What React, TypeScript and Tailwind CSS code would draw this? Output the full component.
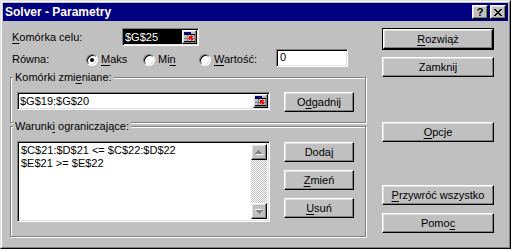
import React from 'react';

// classic 3D edges
const raised =
  'bg-[#c0c0c0] border border-t-white border-l-white border-r-black border-b-black shadow-[inset_-1px_-1px_0_#808080,inset_1px_1px_0_#dfdfdf]';
const sunken =
  'border border-t-[#808080] border-l-[#808080] border-r-white border-b-white shadow-[inset_1px_1px_0_#000,inset_-1px_-1px_0_#dfdfdf]';

const Key: React.FC<{ children: React.ReactNode }> = ({ children }) => (
  <span className="underline decoration-1 underline-offset-[2px]">{children}</span>
);

const Button: React.FC<{ className?: string; children: React.ReactNode }> = ({ className = '', children }) => (
  <div className={`${raised} h-[20px] flex items-center justify-center leading-none ${className}`}>{children}</div>
);

const RefButton: React.FC = () => (
  <div className={`${raised} w-[15px] h-[14px] flex items-center justify-center shrink-0`}>
    <svg width="11" height="10" viewBox="0 0 11 10" shapeRendering="crispEdges">
      <rect x="0" y="0" width="7" height="2" fill="#000080" />
      <rect x="0" y="2" width="11" height="1" fill="#000" />
      <rect x="3" y="3" width="1" height="7" fill="#808080" />
      <rect x="7" y="3" width="1" height="7" fill="#808080" />
      <rect x="10" y="3" width="1" height="7" fill="#808080" />
      <rect x="0" y="6" width="11" height="1" fill="#808080" />
      <rect x="0" y="9" width="11" height="1" fill="#000" />
      <polygon points="5,4 9,4 5,8" fill="#ff0000" />
      <path d="M6 5 L9 8" stroke="#ff0000" strokeWidth="1.5" />
    </svg>
  </div>
);

const Radio: React.FC<{ checked?: boolean }> = ({ checked }) => (
  <div className="w-[12px] h-[12px] rounded-full bg-white border border-t-[#808080] border-l-[#808080] border-r-white border-b-white shadow-[inset_1px_1px_0_#000,inset_-1px_-1px_0_#dfdfdf] flex items-center justify-center shrink-0">
    {checked && <div className="w-[4px] h-[4px] rounded-full bg-black" />}
  </div>
);

const Group: React.FC<{ label: React.ReactNode; className?: string; children: React.ReactNode }> = ({
  label,
  className = '',
  children,
}) => (
  <div className={`relative border border-[#808080] shadow-[inset_1px_1px_0_#fff,1px_1px_0_#fff] ${className}`}>
    <span className="absolute left-[2px] top-[-7px] bg-[#c0c0c0] px-[2px] leading-[13px]">{label}</span>
    {children}
  </div>
);

const Arrow: React.FC<{ down?: boolean }> = ({ down }) => (
  <svg width="8" height="5" viewBox="0 0 8 5" shapeRendering="crispEdges" className={down ? 'rotate-180' : ''}>
    <g fill="#fff" transform="translate(1,1)">
      <rect x="3" y="0" width="1" height="1" />
      <rect x="2" y="1" width="3" height="1" />
      <rect x="1" y="2" width="5" height="1" />
      <rect x="0" y="3" width="7" height="1" />
    </g>
    <g fill="#808080">
      <rect x="3" y="0" width="1" height="1" />
      <rect x="2" y="1" width="3" height="1" />
      <rect x="1" y="2" width="5" height="1" />
      <rect x="0" y="3" width="7" height="1" />
    </g>
  </svg>
);

export default function App() {
  return (
    <div className="w-[511px] h-[249px] bg-[#c0c0c0] border border-t-[#dfdfdf] border-l-[#dfdfdf] border-r-black border-b-black font-['Liberation_Sans',Arial,sans-serif] text-[11px] text-black select-none">
      <div className="h-full border border-t-white border-l-white border-r-[#808080] border-b-[#808080] p-px flex flex-col">
        {/* title bar */}
        <div className="h-[18px] bg-[#000080] flex items-center justify-between pl-[2px] pr-[2px]">
          <span className="text-white font-bold text-[12px] leading-none">Solver - Parametry</span>
          <div className="flex gap-[2px]">
            <div className={`${raised} w-[16px] h-[14px] flex items-center justify-center font-bold text-[11px] leading-none`}>
              ?
            </div>
            <div className={`${raised} w-[16px] h-[14px] flex items-center justify-center`}>
              <svg width="8" height="7" viewBox="0 0 8 7" shapeRendering="crispEdges">
                <path
                  d="M0 0h2v1h-2zM6 0h2v1h-2zM1 1h2v1h-2zM5 1h2v1h-2zM2 2h4v1h-4zM3 3h2v1h-2zM2 4h4v1h-4zM1 5h2v1h-2zM5 5h2v1h-2zM0 6h2v1h-2zM6 6h2v1h-2z"
                  fill="#000"
                />
              </svg>
            </div>
          </div>
        </div>

        <div className="flex pl-[7px]">
          {/* left column */}
          <div className="w-[356px] flex flex-col">
            <div className="mt-[7px] h-[18px] flex items-center">
              <span className="w-[112px] pl-[2px]">
                <Key>K</Key>omórka celu:
              </span>
              <div className={`${sunken} w-[77px] h-[18px] bg-white flex items-center pl-[1px] pr-px`}>
                <div className="flex-1 h-[14px] bg-black text-white leading-[14px] pl-px">$G$25</div>
                <RefButton />
              </div>
            </div>

            <div className="mt-[3px] h-[18px] flex items-start">
              <span className="w-[76px] pl-[2px] pt-[4px] leading-[13px]">Równa:</span>
              <div className="w-[57px] flex items-start pt-[5px]">
                <Radio checked />
                <span className="ml-[3px] leading-[13px] -mt-[1px]">
                  <Key>M</Key>aks
                </span>
              </div>
              <div className="w-[56px] flex items-start pt-[5px]">
                <Radio />
                <span className="ml-[3px] leading-[13px] -mt-[1px]">
                  Mi<Key>n</Key>
                </span>
              </div>
              <div className="w-[77px] flex items-start pt-[5px]">
                <Radio />
                <span className="ml-[3px] leading-[13px] -mt-[1px]">
                  <Key>W</Key>artość:
                </span>
              </div>
              <div className={`${sunken} w-[72px] h-[18px] bg-white pl-[3px] leading-[14px]`}>0</div>
            </div>

            <Group
              className="mt-[10px] h-[46px] pt-[14px] pl-[6px] flex items-start"
              label={
                <>
                  Komórki zmi<Key>e</Key>niane:
                </>
              }
            >
              <div className={`${sunken} w-[253px] h-[18px] bg-white flex items-center pl-[2px] pr-px`}>
                <span className="flex-1 leading-[14px]">$G$19:$G$20</span>
                <RefButton />
              </div>
              <Button className="w-[70px] ml-[14px]">
                O<Key>d</Key>gadnij
              </Button>
            </Group>

            <Group
              className="mt-[3px] h-[111px] pt-[14px] pl-[6px] flex items-start"
              label={
                <>
                  Warunk<Key>i</Key> ograniczające:
                </>
              }
            >
              <div className={`${sunken} w-[253px] h-[81px] bg-white flex p-[2px]`}>
                <div className="flex-1 pl-px leading-[13px]">
                  <div>$C$21:$D$21 &lt;= $C$22:$D$22</div>
                  <div>$E$21 &gt;= $E$22</div>
                </div>
                <div className="w-[16px] flex flex-col">
                  <div className={`${raised} h-[16px] flex items-center justify-center`}>
                    <Arrow />
                  </div>
                  <div className="flex-1 bg-[image:repeating-conic-gradient(#c0c0c0_0%_25%,#ffffff_0%_50%)] bg-[length:2px_2px]" />
                  <div className={`${raised} h-[16px] flex items-center justify-center`}>
                    <Arrow down />
                  </div>
                </div>
              </div>
              <div className="ml-[14px] mt-px flex flex-col gap-[8px]">
                <Button className="w-[70px]">
                  Doda<Key>j</Key>
                </Button>
                <Button className="w-[70px]">
                  <Key>Z</Key>mień
                </Button>
                <Button className="w-[70px]">
                  <Key>U</Key>suń
                </Button>
              </div>
            </Group>
          </div>

          {/* right column */}
          <div className="ml-[16px] w-[112px] flex flex-col">
            <div className="mt-[7px] border border-black">
              <Button className="h-[18px]">
                <Key>R</Key>ozwiąż
              </Button>
            </div>
            <Button className="mt-[7px]">Zamknij</Button>
            <Button className="mt-[45px]">
              <Key>O</Key>pcje
            </Button>
            <Button className="mt-[43px]">
              <Key>P</Key>rzywróć wszystko
            </Button>
            <Button className="mt-[8px]">
              Pomo<Key>c</Key>
            </Button>
          </div>
        </div>
      </div>
    </div>
  );
}
